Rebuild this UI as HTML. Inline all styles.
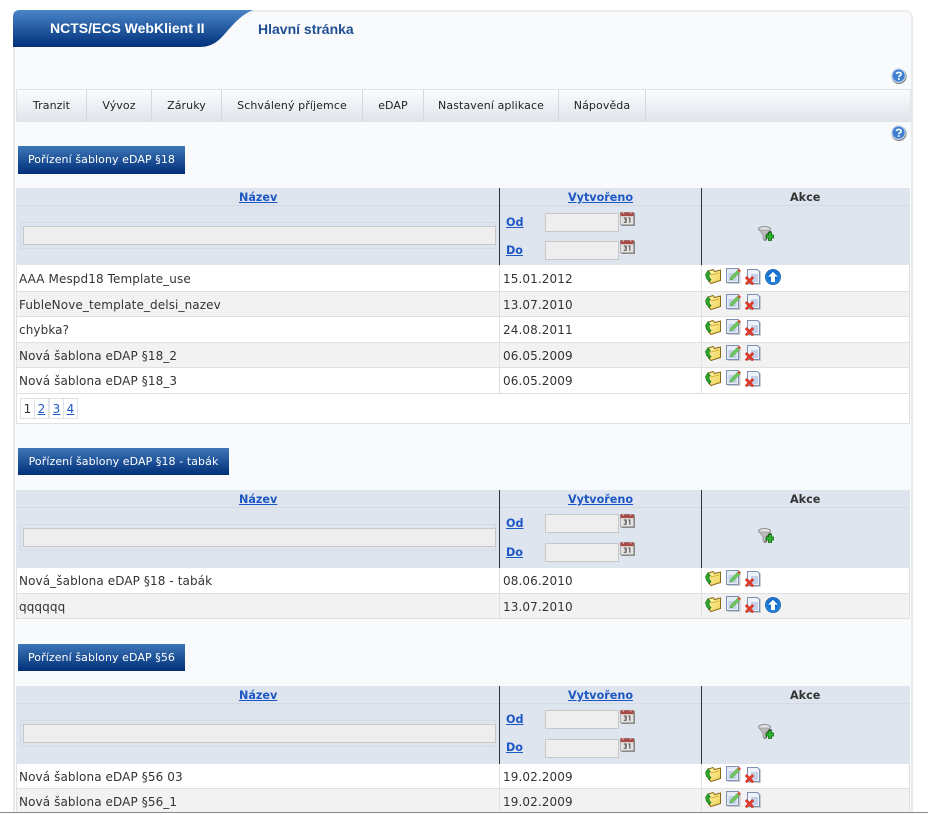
<!DOCTYPE html>
<html lang="cs"><head><meta charset="utf-8"><title>NCTS/ECS WebKlient II</title>
<style>
html,body{margin:0;padding:0;background:#fff;overflow:hidden;width:928px;height:815px}
body{position:relative;font-family:"DejaVu Sans","Liberation Sans",sans-serif;font-size:12px;color:#333}
div,a,span,svg{position:absolute;box-sizing:border-box;white-space:nowrap}
#wrap{left:13px;top:10px;width:900px;height:803px;background:#f9fafc;border:2px solid #e8eaec;border-bottom:0;border-radius:8px 8px 0 0}
#bottom{left:0;top:812px;width:928px;height:1px;background:#8a8a8a}
#under{left:0;top:813px;width:928px;height:2px;background:#fff}
.mi{top:90px;height:32px;line-height:31px;font-size:11px;letter-spacing:.1px;color:#222;text-align:center;border-right:1px solid #d4d8dc}
.btn{left:18px;background:linear-gradient(#3e76b8,#002f78);color:#fff;font-size:11px;letter-spacing:.08px;text-align:center}
.hd{left:16px;width:894px;background:#dfe5ef}
.hdl{left:16px;width:894px;height:1px;background:#d6dbe3}
.v{width:1px;background:#2f3338}
.lnk{color:#1c57c4;font-weight:bold;font-size:11.2px;text-decoration:underline}
.ak{left:790px;font-weight:bold;font-size:11.2px;color:#333}
.inp{background:#eeeeee;border:1px solid #c8c8c8;height:19px}
.row{left:16px;width:894px;border-left:1px solid #e0e0e0;border-right:1px solid #e0e0e0;border-bottom:1px solid #e0e0e0;line-height:25px;font-size:12px;letter-spacing:.1px;color:#333}
.w{background:#fff}.g{background:#f2f2f2}
.row .c1{left:2px;top:1px}.row .c2{left:486px;top:1px}
.row .sep{left:482px;top:0;bottom:0;width:1px;background:#e0e0e0}
.row .sep2{left:684px;top:0;bottom:0;width:1px;background:#e0e0e0}
.pg{top:398px;width:15px;height:21px;border:1px solid #dfe2e5;background:#fff;text-align:center;line-height:20px;font-family:"DejaVu Sans",sans-serif;font-size:12px}
.pg a{position:static;color:#1c57c4;text-decoration:underline}
</style></head><body>
<svg width="0" height="0" style="left:0;top:0"><defs>
<linearGradient id="gb" x1="0" y1="0" x2="0" y2="1"><stop offset="0" stop-color="#4a85c8"/><stop offset="1" stop-color="#00307a"/></linearGradient>
<linearGradient id="fy" x1="0" y1="0" x2="1" y2="1"><stop offset="0" stop-color="#fdf3b0"/><stop offset="1" stop-color="#f0d050"/></linearGradient>
<radialGradient id="ub" cx=".5" cy=".4" r=".65"><stop offset="0" stop-color="#0a56c0"/><stop offset="1" stop-color="#2a90e8"/></radialGradient>
<symbol id="open" viewBox="0 0 16 16"><path d="M3.500 3L8 1.500l1.500 2L15.500 2V12.500L6 15.500 3.500 13z" fill="url(#fy)" stroke="#8a6a18" stroke-width="1"/><path d="M6 7L14 5" stroke="#d8b030" fill="none"/><path d="M.5 6.500L3 2.500l2.500 3.500H4.200V9.500L6 11.500 4.500 13.500 1.500 10.500z" fill="#2aa82a" stroke="#146a14" stroke-width=".6"/></symbol>
<symbol id="edit" viewBox="0 0 16 16"><path d="M2.500 2h13v14h-13z" fill="#aaa" opacity=".55"/><path d="M1.500 .5h12v14h-12z" fill="#e6ecf6" stroke="#7e90b0"/><path d="M3.500 5h8v8h-8z" fill="#c4d1e8"/><path d="M5 12l.8-3 6.700-6.800 2.200 2.200L8 11.200z" fill="#6cc85a" stroke="#4a9a40" stroke-width=".5"/><path d="M12.500 2.200L14 .7l2 2-1.500 1.500z" fill="#de4636"/></symbol>
<symbol id="del" viewBox="0 0 16 16"><path d="M4 2h12v14H4z" fill="#aaa" opacity=".55"/><path d="M2.500 .5h10l2 2v12h-12z" fill="#eef2f9" stroke="#7e90b0"/><path d="M6 5h7v8H6z" fill="#c4d1e8"/><path d="M0 9l1.800-1.800L4.500 9.900l2.700-2.700L9 9l-2.700 2.700L9 14.400l-1.800 1.600-2.700-2.600L1.800 16 0 14.400l2.700-2.700z" fill="#e43a28" stroke="#a82014" stroke-width=".3"/></symbol>
<symbol id="up" viewBox="0 0 16 16"><circle cx="8" cy="8" r="7.600" fill="url(#ub)" stroke="#0c4c9c" stroke-width=".6"/><path d="M8 2.800l4.800 4.800H10V13H6V7.600H3.200z" fill="#fff"/></symbol>
<symbol id="help" viewBox="0 0 16 16"><circle cx="8" cy="8.400" r="7.600" fill="#7c7c7c"/><circle cx="7.600" cy="7.600" r="6.700" fill="#3f80d0" stroke="#c8d6e8" stroke-width="1.200"/><path d="M5.400 6C5.700 3.900 10 3.900 10.100 6.100 10.100 7.800 7.800 7.600 7.800 9.100" fill="none" stroke="#fff" stroke-width="1.600"/><circle cx="7.800" cy="11" r="1" fill="#fff"/></symbol>
<symbol id="cal" viewBox="0 0 16 16"><path d="M1.500 2h14.500v14H1.500z" fill="#8a8a8a"/><path d="M.5 1.500h14v13h-14z" fill="#e6e4e2" stroke="#8a8a8a" stroke-width=".6"/><path d="M.5 1.500h14v4h-14z" fill="#a84a48"/><path d="M3.500 0v3M11.500 0v3" stroke="#e8c8c8"/><path d="M4 7.500h2.500V9.500H5M6.500 9.500V12H4M9 7.500h1.500V12.500" fill="none" stroke="#444" stroke-width="1.100"/></symbol>
<symbol id="fil" viewBox="0 0 16 16"><path d="M2 5l4 5v5l3-1V10l5-5z" fill="#555"/><ellipse cx="6.500" cy="3" rx="6" ry="2.400" fill="#e4e4e4" stroke="#777" stroke-width=".8"/><path d="M1 4l4 5v4l3 1V9l4-5z" fill="#bcbcbc" stroke="#808080" stroke-width=".6"/><path d="M8 9h2.500V6.500h3V9H16v3h-2.500v2.500h-3V12H8z" fill="#2fb52f" stroke="#0f600f" stroke-width=".8"/></symbol>
</defs></svg>

<div id="wrap"></div>

<svg style="left:13px;top:10px" width="242" height="37" viewBox="0 0 242 37"><path d="M0 37V7Q0 0 7 0H240C225 6 216 20 208 28 201 35 194 37 186 37z" fill="url(#gb)"/></svg>
<div style="left:50px;top:20px;font:bold 14px 'Liberation Sans',sans-serif;color:#fff">NCTS/ECS WebKlient II</div>
<div style="left:258px;top:21px;font:bold 14px 'Liberation Sans',sans-serif;color:#1f4f92">Hlavní stránka</div>

<svg style="left:891px;top:68px" width="16" height="16"><use href="#help"/></svg>
<div style="left:16px;top:89px;width:895px;height:33px;border:1px solid #e0e3e6;background:linear-gradient(#fbfcfd,#dfe5ec)"></div>
<div class="mi" style="left:17px;width:70px">Tranzit</div>
<div class="mi" style="left:87px;width:65px">Vývoz</div>
<div class="mi" style="left:152px;width:70px">Záruky</div>
<div class="mi" style="left:222px;width:141px">Schválený příjemce</div>
<div class="mi" style="left:363px;width:61px">eDAP</div>
<div class="mi" style="left:424px;width:135px">Nastavení aplikace</div>
<div class="mi" style="left:559px;width:87px">Nápověda</div>
<svg style="left:891px;top:125px" width="16" height="16"><use href="#help"/></svg>

<!-- section 1 -->
<div class="btn" style="top:146px;width:167px;height:28px;line-height:28px">Pořízení šablony eDAP §18</div>
<div class="hd" style="top:188px;height:77px"></div>
<div class="hdl" style="top:205px"></div>
<div style="left:20px;top:222px;width:476px;height:27px;border:1px solid #d6dbe3"></div>
<div class="v" style="left:499px;top:188px;height:77px"></div>
<div class="v" style="left:701px;top:188px;height:77px"></div>
<a class="lnk" style="left:239px;top:191px">Název</a>
<a class="lnk" style="left:568px;top:191px">Vytvořeno</a>
<div class="ak" style="top:191px">Akce</div>
<div class="inp" style="left:23px;top:226px;width:473px"></div>
<a class="lnk" style="left:506px;top:216px">Od</a>
<a class="lnk" style="left:506px;top:244px">Do</a>
<div class="inp" style="left:545px;top:213px;width:74px"></div>
<div class="inp" style="left:545px;top:241px;width:74px"></div>
<svg style="left:620px;top:211px" width="15" height="15"><use href="#cal"/></svg>
<svg style="left:620px;top:239px" width="15" height="15"><use href="#cal"/></svg>
<svg style="left:758px;top:226px" width="16" height="16"><use href="#fil"/></svg>

<div class="row w" style="top:265px;height:27px"><span class="c1" style="top:2px">AAA Mespd18 Template_use</span><span class="c2" style="top:2px">15.01.2012</span><i class="sep" style="position:absolute"></i><i class="sep2" style="position:absolute"></i></div>
<svg style="left:705px;top:268px" width="16" height="16"><use href="#open"/></svg><svg style="left:725px;top:268px" width="16" height="16"><use href="#edit"/></svg><svg style="left:745px;top:269px" width="16" height="16"><use href="#del"/></svg><svg style="left:765px;top:269px" width="16" height="16"><use href="#up"/></svg>

<div class="row g" style="top:292px;height:25px"><span class="c1" style="top:1px">FubleNove_template_delsi_nazev</span><span class="c2" style="top:1px">13.07.2010</span><i class="sep" style="position:absolute"></i><i class="sep2" style="position:absolute"></i></div>
<svg style="left:705px;top:294px" width="16" height="16"><use href="#open"/></svg><svg style="left:725px;top:294px" width="16" height="16"><use href="#edit"/></svg><svg style="left:745px;top:294px" width="16" height="16"><use href="#del"/></svg>

<div class="row w" style="top:317px;height:26px"><span class="c1" style="top:1px">chybka?</span><span class="c2" style="top:1px">24.08.2011</span><i class="sep" style="position:absolute"></i><i class="sep2" style="position:absolute"></i></div>
<svg style="left:705px;top:319px" width="16" height="16"><use href="#open"/></svg><svg style="left:725px;top:319px" width="16" height="16"><use href="#edit"/></svg><svg style="left:745px;top:320px" width="16" height="16"><use href="#del"/></svg>

<div class="row g" style="top:343px;height:25px"><span class="c1" style="top:1px">Nová šablona eDAP §18_2</span><span class="c2" style="top:1px">06.05.2009</span><i class="sep" style="position:absolute"></i><i class="sep2" style="position:absolute"></i></div>
<svg style="left:705px;top:345px" width="16" height="16"><use href="#open"/></svg><svg style="left:725px;top:345px" width="16" height="16"><use href="#edit"/></svg><svg style="left:745px;top:345px" width="16" height="16"><use href="#del"/></svg>

<div class="row w" style="top:368px;height:26px"><span class="c1" style="top:1px">Nová šablona eDAP §18_3</span><span class="c2" style="top:1px">06.05.2009</span><i class="sep" style="position:absolute"></i><i class="sep2" style="position:absolute"></i></div>
<svg style="left:705px;top:370px" width="16" height="16"><use href="#open"/></svg><svg style="left:725px;top:370px" width="16" height="16"><use href="#edit"/></svg><svg style="left:745px;top:371px" width="16" height="16"><use href="#del"/></svg>

<div class="row w" style="top:394px;height:30px"></div>
<div class="pg" style="left:20px">1</div><div class="pg" style="left:34px"><a>2</a></div><div class="pg" style="left:49px"><a>3</a></div><div class="pg" style="left:63px"><a>4</a></div>

<!-- section 2 -->
<div class="btn" style="top:448px;width:211px;height:27px;line-height:27px">Pořízení šablony eDAP §18 - tabák</div>
<div class="hd" style="top:490px;height:78px"></div>
<div class="hdl" style="top:507px"></div>
<div style="left:20px;top:524px;width:476px;height:27px;border:1px solid #d6dbe3"></div>
<div class="v" style="left:499px;top:490px;height:78px"></div>
<div class="v" style="left:701px;top:490px;height:78px"></div>
<a class="lnk" style="left:239px;top:493px">Název</a>
<a class="lnk" style="left:568px;top:493px">Vytvořeno</a>
<div class="ak" style="top:493px">Akce</div>
<div class="inp" style="left:23px;top:528px;width:473px"></div>
<a class="lnk" style="left:506px;top:517px">Od</a>
<a class="lnk" style="left:506px;top:546px">Do</a>
<div class="inp" style="left:545px;top:514px;width:74px"></div>
<div class="inp" style="left:545px;top:543px;width:74px"></div>
<svg style="left:620px;top:513px" width="15" height="15"><use href="#cal"/></svg>
<svg style="left:620px;top:541px" width="15" height="15"><use href="#cal"/></svg>
<svg style="left:758px;top:528px" width="16" height="16"><use href="#fil"/></svg>

<div class="row w" style="top:568px;height:26px"><span class="c1" style="top:1px">Nová_šablona eDAP §18 - tabák</span><span class="c2" style="top:1px">08.06.2010</span><i class="sep" style="position:absolute"></i><i class="sep2" style="position:absolute"></i></div>
<svg style="left:705px;top:570px" width="16" height="16"><use href="#open"/></svg><svg style="left:725px;top:570px" width="16" height="16"><use href="#edit"/></svg><svg style="left:745px;top:571px" width="16" height="16"><use href="#del"/></svg>

<div class="row g" style="top:594px;height:25px"><span class="c1" style="top:1px">qqqqqq</span><span class="c2" style="top:1px">13.07.2010</span><i class="sep" style="position:absolute"></i><i class="sep2" style="position:absolute"></i></div>
<svg style="left:705px;top:596px" width="16" height="16"><use href="#open"/></svg><svg style="left:725px;top:596px" width="16" height="16"><use href="#edit"/></svg><svg style="left:745px;top:597px" width="16" height="16"><use href="#del"/></svg><svg style="left:765px;top:597px" width="16" height="16"><use href="#up"/></svg>

<!-- section 3 -->
<div class="btn" style="top:644px;width:167px;height:27px;line-height:27px">Pořízení šablony eDAP §56</div>
<div class="hd" style="top:686px;height:78px"></div>
<div class="hdl" style="top:703px"></div>
<div style="left:20px;top:720px;width:476px;height:27px;border:1px solid #d6dbe3"></div>
<div class="v" style="left:499px;top:686px;height:78px"></div>
<div class="v" style="left:701px;top:686px;height:78px"></div>
<a class="lnk" style="left:239px;top:689px">Název</a>
<a class="lnk" style="left:568px;top:689px">Vytvořeno</a>
<div class="ak" style="top:689px">Akce</div>
<div class="inp" style="left:23px;top:724px;width:473px"></div>
<a class="lnk" style="left:506px;top:713px">Od</a>
<a class="lnk" style="left:506px;top:741px">Do</a>
<div class="inp" style="left:545px;top:710px;width:74px"></div>
<div class="inp" style="left:545px;top:739px;width:74px"></div>
<svg style="left:620px;top:709px" width="15" height="15"><use href="#cal"/></svg>
<svg style="left:620px;top:737px" width="15" height="15"><use href="#cal"/></svg>
<svg style="left:758px;top:724px" width="16" height="16"><use href="#fil"/></svg>

<div class="row w" style="top:764px;height:25px"><span class="c1" style="top:1px">Nová šablona eDAP §56 03</span><span class="c2" style="top:1px">19.02.2009</span><i class="sep" style="position:absolute"></i><i class="sep2" style="position:absolute"></i></div>
<svg style="left:705px;top:766px" width="16" height="16"><use href="#open"/></svg><svg style="left:725px;top:766px" width="16" height="16"><use href="#edit"/></svg><svg style="left:745px;top:767px" width="16" height="16"><use href="#del"/></svg>

<div class="row g" style="top:789px;height:26px"><span class="c1" style="top:1px">Nová šablona eDAP §56_1</span><span class="c2" style="top:1px">19.02.2009</span><i class="sep" style="position:absolute"></i><i class="sep2" style="position:absolute"></i></div>
<svg style="left:705px;top:791px" width="16" height="16"><use href="#open"/></svg><svg style="left:725px;top:791px" width="16" height="16"><use href="#edit"/></svg><svg style="left:745px;top:792px" width="16" height="16"><use href="#del"/></svg>

<div id="bottom"></div><div id="under"></div>
</body></html>
